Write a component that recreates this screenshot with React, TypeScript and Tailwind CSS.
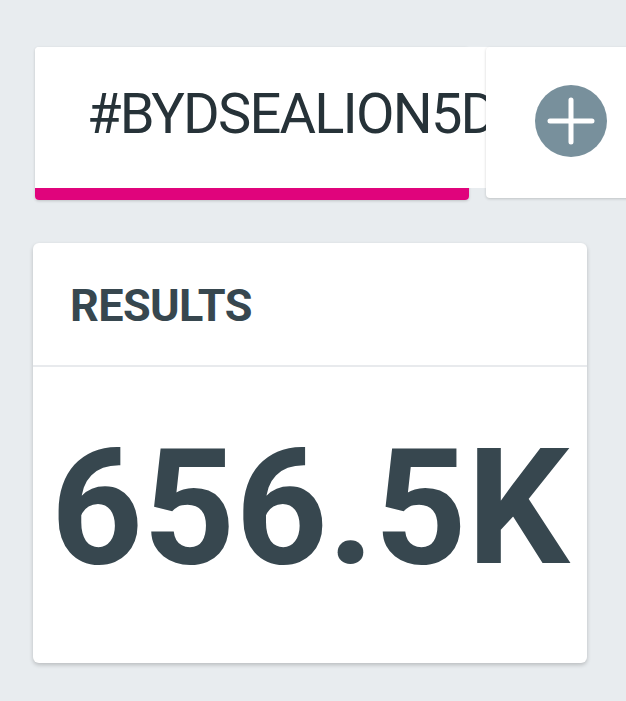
function PlusBadge() {
  return (
    <svg width="72" height="72" viewBox="0 0 72 72">
      <circle cx="36" cy="36" r="36" fill="#78909c" />
      <path d="M15 36h42M36 15v42" stroke="#fff" strokeWidth="5" strokeLinecap="round" />
    </svg>
  );
}

function HashtagTabs() {
  return (
    <div className="flex items-start gap-[17px] pt-[47px] pl-[35px]">
      <div className="relative flex h-[153px] w-[434px] shrink-0 flex-col rounded-[4px] bg-white shadow-[0_1px_3px_rgba(0,0,0,0.18)]">
        <div className="flex w-max min-w-full flex-1 items-center whitespace-nowrap rounded-tl-[4px] bg-white pr-10 pb-[8px] pl-[52px]">
          <span className="text-[56px] leading-none tracking-[-1.8px] text-[#263238]">#BYDSEALION5D</span>
        </div>
        <div className="h-[12px] rounded-b-[4px] bg-[#e0047c]" />
      </div>
      <div className="relative z-10 h-[151px] w-[160px] shrink-0 rounded-[4px] bg-white pt-[38px] pl-[49px] shadow-[0_1px_3px_rgba(0,0,0,0.18)]">
        <PlusBadge />
      </div>
    </div>
  );
}

function ResultsCard() {
  return (
    <div className="mx-[33px] mt-[43px] w-[554px] rounded-[6px] bg-white shadow-[0_2px_4px_rgba(0,0,0,0.2)]">
      <div className="flex h-[124px] items-center border-b-2 border-[#e8eaed] pl-[37px]">
        <h2 className="pt-[4px] text-[45px] font-bold tracking-[-0.6px] text-[#37474f]">RESULTS</h2>
      </div>
      <div className="flex h-[296px] items-center justify-center pb-[14px]">
        <span className="text-[161px] font-bold leading-none text-[#37474f]">656.5K</span>
      </div>
    </div>
  );
}

export default function App() {
  return (
    <div className="h-[701px] w-[626px] overflow-hidden bg-[#e8ecef] font-['Roboto',sans-serif]">
      <HashtagTabs />
      <ResultsCard />
    </div>
  );
}
